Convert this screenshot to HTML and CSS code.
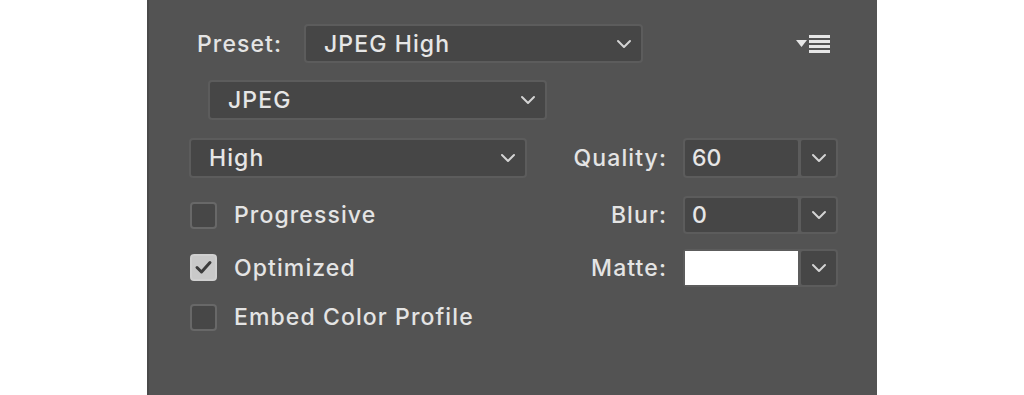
FILE: index.html
```html
<!DOCTYPE html>
<html lang="en">
<head>
  <meta charset="UTF-8" />
  <title>Save for Web - JPEG</title>
  <link rel="stylesheet" href="styles.css">
</head>
<body>
  <div class="panel">
    <!-- Preset -->
    <div class="row row-preset">
      <span class="label preset-label">Preset:</span>
      <div class="select select-preset">
        <span>JPEG High</span>
        <svg class="chevron" width="16" height="10" viewBox="0 0 16 10"><path d="M2 2 L8 8 L14 2" /></svg>
      </div>
      <div class="panel-menu">
        <svg width="34" height="18" viewBox="0 0 34 18">
          <polygon points="0,5 11,5 5.5,12" />
          <rect x="13" y="0" width="21" height="3" />
          <rect x="13" y="5" width="21" height="3" />
          <rect x="13" y="10" width="21" height="3" />
          <rect x="13" y="15" width="21" height="3" />
        </svg>
      </div>
    </div>

    <!-- Format -->
    <div class="row row-format">
      <div class="select select-format">
        <span>JPEG</span>
        <svg class="chevron" width="16" height="10" viewBox="0 0 16 10"><path d="M2 2 L8 8 L14 2" /></svg>
      </div>
    </div>

    <!-- Quality -->
    <div class="row row-quality">
      <div class="left-col">
        <div class="select select-quality">
          <span>High</span>
          <svg class="chevron" width="16" height="10" viewBox="0 0 16 10"><path d="M2 2 L8 8 L14 2" /></svg>
        </div>
      </div>
      <span class="label side-label">Quality:</span>
      <div class="combo">
        <div class="combo-field">60</div>
        <div class="combo-btn"><svg class="chevron" width="16" height="10" viewBox="0 0 16 10"><path d="M2 2 L8 8 L14 2" /></svg></div>
      </div>
    </div>

    <!-- Progressive / Blur -->
    <div class="row row-blur">
      <div class="left-col">
        <span class="checkbox"></span>
        <span class="label">Progressive</span>
      </div>
      <span class="label side-label">Blur:</span>
      <div class="combo">
        <div class="combo-field">0</div>
        <div class="combo-btn"><svg class="chevron" width="16" height="10" viewBox="0 0 16 10"><path d="M2 2 L8 8 L14 2" /></svg></div>
      </div>
    </div>

    <!-- Optimized / Matte -->
    <div class="row row-matte">
      <div class="left-col">
        <span class="checkbox checked">
          <svg width="23" height="23" viewBox="0 0 23 23"><path d="M5 11.5 L9.5 16 L18 6.5" /></svg>
        </span>
        <span class="label">Optimized</span>
      </div>
      <span class="label side-label">Matte:</span>
      <div class="combo">
        <div class="combo-field matte-swatch"></div>
        <div class="combo-btn"><svg class="chevron" width="16" height="10" viewBox="0 0 16 10"><path d="M2 2 L8 8 L14 2" /></svg></div>
      </div>
    </div>

    <!-- Embed -->
    <div class="row row-embed">
      <div class="left-col">
        <span class="checkbox"></span>
        <span class="label">Embed Color Profile</span>
      </div>
    </div>
  </div>
</body>
</html>
```

FILE: styles.css
```css
body {
  margin: 0;
  background: #ffffff;
  font-family: 'Inter', 'Liberation Sans', sans-serif;
}
.panel {
  margin-left: 147px;
  width: 730px;
  height: 395px;
  box-sizing: border-box;
  padding: 24px 0 0 40px;
  background: #535353;
  border-left: 2px solid #4a4a4a;
  display: flex;
  flex-direction: column;
  color: #e2e2e2;
}
.row {
  display: flex;
  align-items: center;
  flex-shrink: 0;
}
.label {
  font-size: 23px;
  font-weight: 500;
  letter-spacing: 1.1px;
  color: #e4e4e4;
  white-space: nowrap;
}
.select {
  box-sizing: border-box;
  display: flex;
  align-items: center;
  justify-content: space-between;
  padding: 0 9px 0 18px;
  background: #464646;
  border: 2px solid #5c5c5c;
  border-radius: 4px;
  font-size: 23px;
  font-weight: 500;
  letter-spacing: 1.1px;
  color: #e6e6e6;
}
.chevron path {
  fill: none;
  stroke: #d4d4d4;
  stroke-width: 2;
  stroke-linecap: round;
  stroke-linejoin: round;
}

/* rows */
.row-preset {
  height: 39px;
  padding-left: 8px;
}
.preset-label {
  width: 107px;
}
.select-preset {
  width: 339px;
  height: 39px;
}
.panel-menu {
  margin-left: auto;
  margin-right: 47px;
  height: 18px;
}
.panel-menu svg {
  display: block;
  fill: #e6e6e6;
}
.row-format {
  margin-top: 17px;
  height: 40px;
  padding-left: 19px;
}
.select-format {
  width: 339px;
  height: 40px;
}
.row-quality {
  margin-top: 18px;
  height: 40px;
}
.select-quality {
  width: 338px;
  height: 40px;
}
.row-blur {
  margin-top: 18px;
  height: 38px;
}
.row-matte {
  margin-top: 14px;
  height: 39px;
}
.row-embed {
  margin-top: 11px;
  height: 38px;
}

.left-col {
  width: 338px;
  display: flex;
  align-items: center;
}
.side-label {
  width: 156px;
  box-sizing: border-box;
  padding-right: 16px;
  text-align: right;
}

/* number field + dropdown button */
.combo {
  width: 155px;
  height: 38px;
  box-sizing: border-box;
  padding: 2px;
  display: flex;
  gap: 3px;
  background: #5c5c5c;
  border-radius: 4px;
}
.row-quality .combo {
  height: 40px;
}
.combo-field {
  flex: 1;
  display: flex;
  align-items: center;
  padding-left: 7px;
  background: #464646;
  border-radius: 2px;
  font-size: 23px;
  font-weight: 500;
  color: #e6e6e6;
}
.matte-swatch {
  background: #ffffff;
  border-radius: 0;
}
.combo-btn {
  width: 35px;
  display: flex;
  align-items: center;
  justify-content: center;
  background: #464646;
  border-radius: 2px;
}

/* checkboxes */
.checkbox {
  box-sizing: border-box;
  width: 27px;
  height: 27px;
  margin-left: 1px;
  margin-right: 17px;
  border: 2px solid #686868;
  border-radius: 4px;
  background: #474747;
  display: flex;
  align-items: center;
  justify-content: center;
}
.checkbox.checked {
  background: #c9c9c9;
  border-color: #d0d0d0;
}
.checkbox svg path {
  fill: none;
  stroke: #3c3c3c;
  stroke-width: 3;
  stroke-linecap: round;
  stroke-linejoin: round;
}
```
